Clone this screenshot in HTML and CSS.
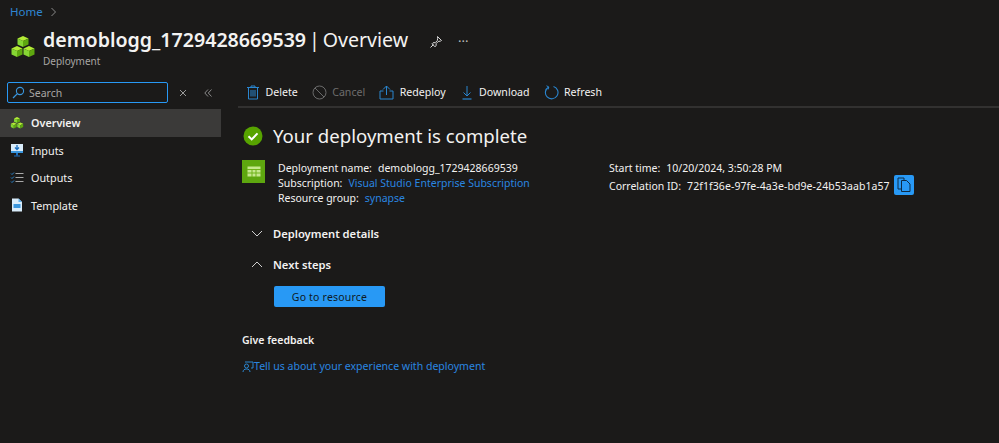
FILE: index.html
```html
<!DOCTYPE html>
<html lang="en">
<head>
<meta charset="utf-8">
<title>demoblogg_1729428669539 | Overview</title>
<link rel="stylesheet" href="styles.css">
</head>
<body>
<svg width="0" height="0" class="defs">
  <defs>
    <g id="cube">
      <polygon points="0,-5 5.5,-2.5 0,0 -5.5,-2.5" fill="#b4ec36"/>
      <polygon points="-5.5,-2.5 0,0 0,6 -5.5,3.5" fill="#86d633"/>
      <polygon points="5.5,-2.5 0,0 0,6 5.500,3.500" fill="#5ea70f"/>
    </g>
  </defs>
</svg>
<header class="top">
  <nav class="crumbs"><a class="link-home">Home</a>
    <svg class="crumb-chev" width="7" height="10" viewBox="0 0 7 10"><path d="M1.5 1l4 4-4 4" fill="none" stroke="#8a8a8a" stroke-width="1"/></svg>
  </nav>
  <div class="title-row">
    <svg class="res-icon" width="26" height="26" viewBox="0 0 26 26"><use href="#cube" x="13" y="7"/><use href="#cube" x="7" y="17"/><use href="#cube" x="19" y="17"/></svg>
    <div class="title-text">
      <h1 class="title"><b class="name">demoblogg_1729428669539</b> | Overview</h1>
      <div class="subtitle">Deployment</div>
    </div>
    <svg class="pin" width="14" height="14" viewBox="0 0 14 14"><path d="M8.5 1.5l4 4-1 .6-2.300.4-2 2-.2 2.300-1 1-3-3 1-1 2.300-.2 2-2 .4-2.300zM4.500 9.500L1.500 12.500" fill="none" stroke="#d8d8d8" stroke-width="1"/></svg>
    <span class="more">···</span>
  </div>
</header>
<div class="layout">
  <aside class="side">
    <div class="search-row">
      <label class="search">
        <svg width="13" height="13" viewBox="0 0 13 13"><circle cx="8" cy="5" r="3.600" fill="none" stroke="#3a96dd" stroke-width="1.100"/><path d="M5.400 7.600L1 12" stroke="#3a96dd" stroke-width="1.300"/></svg>
        <span>Search</span>
      </label>
      <svg class="s-x" width="8" height="8" viewBox="0 0 8 8"><path d="M1 1l6 6M7 1l-6 6" stroke="#9a9a9a" stroke-width="1"/></svg>
      <svg class="s-col" width="8" height="8" viewBox="0 0 8 8"><path d="M4 .5L.8 4 4 7.500M7.500 .5L4.300 4l3.200 3.500" fill="none" stroke="#8a8a8a" stroke-width="1"/></svg>
    </div>
    <ul class="menu">
      <li class="item active">
        <svg width="14" height="14" viewBox="0 0 26 26"><use href="#cube" x="13" y="7"/><use href="#cube" x="7" y="17"/><use href="#cube" x="19" y="17"/></svg>
        <span>Overview</span>
      </li>
      <li class="item">
        <svg width="14" height="14" viewBox="0 0 14 14"><rect x="1" y="1" width="12" height="9" fill="#d9ecfa"/><rect x="1" y="8" width="12" height="2" fill="#3a96dd"/><path d="M7 2v4M5 4.500L7 6.500l2-2" fill="none" stroke="#1b6fc0" stroke-width="1.300"/><rect x="6" y="10" width="2" height="2.500" fill="#1b6fc0"/><rect x="4" y="12.500" width="6" height="1" fill="#1b6fc0"/></svg>
        <span>Inputs</span>
      </li>
      <li class="item">
        <svg width="14" height="14" viewBox="0 0 14 14"><path d="M1 2.500l1 1 2-2M1 6.500l1 1 2-2M1 10.500l1 1 2-2" fill="none" stroke="#2a86d0" stroke-width="1"/><path d="M5.500 2.500h8M5.500 6.500h8M5.500 10.500h8" stroke="#a8a8a8" stroke-width="1.200"/></svg>
        <span>Outputs</span>
      </li>
      <li class="item">
        <svg width="14" height="14" viewBox="0 0 14 14"><path d="M2 0.500h6.500L12 4v9.500H2z" fill="#d9ecfa"/><path d="M8.500 .5V4H12z" fill="#5fb0ec"/><rect x="3.500" y="6" width="7" height="4" fill="#3a96dd"/></svg>
        <span>Template</span>
      </li>
    </ul>
  </aside>
  <main class="main">
    <div class="toolbar">
      <button class="tool">
        <svg width="14" height="15" viewBox="0 0 14 15"><path d="M1 2.500h12M5 2.500V1h4v1.500M2.500 2.500V14h9V2.500M5 5v6.500M7 5v6.500M9 5v6.500" fill="none" stroke="#2a86d0" stroke-width="1"/></svg>
        <span>Delete</span>
      </button>
      <button class="tool off">
        <svg width="15" height="15" viewBox="0 0 15 15"><circle cx="7.500" cy="7.500" r="6.500" fill="none" stroke="#6a6a6a" stroke-width="1"/><path d="M3 3l9 9" stroke="#6a6a6a" stroke-width="1"/></svg>
        <span>Cancel</span>
      </button>
      <button class="tool">
        <svg width="15" height="15" viewBox="0 0 15 15"><path d="M7.500 10V1M4 4.500L7.500 1 11 4.500M4.500 6H1v8h13V6h-3.500" fill="none" stroke="#2a86d0" stroke-width="1"/></svg>
        <span>Redeploy</span>
      </button>
      <button class="tool">
        <svg width="14" height="15" viewBox="0 0 14 15"><path d="M7 1v10M3.500 7.500L7 11l3.500-3.500" fill="none" stroke="#2a86d0" stroke-width="1"/><path d="M2.500 14h9" stroke="#2a86d0" stroke-width="1.200"/></svg>
        <span>Download</span>
      </button>
      <button class="tool">
        <svg width="15" height="15" viewBox="0 0 15 15"><path d="M4.700 2A6.300 6.300 0 1 0 9.500 1.500" fill="none" stroke="#2a86d0" stroke-width="1.100"/><path d="M2.500 .8L4.800 2 4 4.500" fill="none" stroke="#2a86d0" stroke-width="1"/></svg>
        <span>Refresh</span>
      </button>
    </div>
    <div class="content">
      <div class="status">
        <svg width="20" height="20" viewBox="0 0 20 20"><circle cx="10" cy="10" r="9.500" fill="#57a300"/><path d="M5.500 10.200l3.200 3.200 5.800-6" fill="none" stroke="#fff" stroke-width="2"/></svg>
        <h2 class="status-title">Your deployment is complete</h2>
      </div>
      <div class="info">
        <div class="tile"><svg width="14" height="11" viewBox="0 0 14 11"><rect x="0.500" y="0.500" width="13" height="10" fill="#c5e88d"/><path d="M0 3.500h14M5 3.500V11M9 3.500V11M0 7h14" stroke="#6fb31a" stroke-width="1"/></svg></div>
        <dl class="col col-left">
          <div class="row"><dt>Deployment name:</dt><dd>demoblogg_1729428669539</dd></div>
          <div class="row"><dt>Subscription:</dt><dd><a class="link">Visual Studio Enterprise Subscription</a></dd></div>
          <div class="row"><dt>Resource group:</dt><dd><a class="link">synapse</a></dd></div>
        </dl>
        <dl class="col col-right">
          <div class="row"><dt>Start time:</dt><dd>10/20/2024, 3:50:28 PM</dd></div>
          <div class="row"><dt>Correlation ID:</dt><dd class="uuid">72f1f36e-97fe-4a3e-bd9e-24b53aab1a57</dd>
            <span class="copy"><svg width="14" height="15" viewBox="0 0 14 15"><path d="M1 1h6v11H1z" fill="#2899f5" stroke="#0e2a42" stroke-width="1"/><path d="M4.500 3.500H9.500L13 7v7.500H4.500z" fill="#2899f5" stroke="#0e2a42" stroke-width="1"/></svg></span>
          </div>
        </dl>
      </div>
      <div class="section sec-details">
        <svg width="12" height="7" viewBox="0 0 12 7"><path d="M1 1l5 5 5-5" fill="none" stroke="#cfcfcf" stroke-width="1"/></svg>
        <span>Deployment details</span>
      </div>
      <div class="section sec-next">
        <svg width="12" height="7" viewBox="0 0 12 7"><path d="M1 6l5-5 5 5" fill="none" stroke="#cfcfcf" stroke-width="1"/></svg>
        <span>Next steps</span>
      </div>
      <button class="primary">Go to resource</button>
      <div class="fb-title">Give feedback</div>
      <a class="fb-link link">
        <svg width="12" height="12" viewBox="0 0 12 12"><circle cx="4.500" cy="5" r="2" fill="none" stroke="#2a86d0" stroke-width="1"/><path d="M1 11c0-2 1.500-3 3.500-3S8 9 8 11M3 1h8v6H9" fill="none" stroke="#2a86d0" stroke-width="1"/></svg>
        <span>Tell us about your experience with deployment</span>
      </a>
    </div>
  </main>
</div>
</body>
</html>
```
FILE: styles.css
```css
* { box-sizing: border-box; }
html, body { height: 100%; }
body {
  margin: 0;
  background: #1b1a19;
  color: #f3f2f1;
  font-family: "Noto Sans", "Open Sans", "Liberation Sans", sans-serif;
  font-size: 11px;
  overflow: hidden;
}
.defs { position: absolute; }
.top { padding: 4px 0 0 10px; height: 78px; }
.crumbs { display: flex; align-items: center; gap: 7px; height: 15px; font-size: 11.500px; }
.link-home { color: #2f86d2; }
.title-row { display: flex; align-items: flex-start; margin-top: 8px; }
.res-icon { margin-top: 7px; margin-right: 7px; }
.title { margin: 0; font-size: 19.600px; font-weight: 400; line-height: 26px; white-space: nowrap; word-spacing: -2.200px; }
.name { font-weight: 600; }
.subtitle { font-size: 10px; line-height: 13px; color: #a8a6a4; margin-top: 2px; }
.pin { margin: 8px 0 0 21px; }
.more { margin: 3px 0 0 15px; font-size: 13px; color: #bdbdbd; line-height: 22px; }
.layout { display: grid; grid-template-columns: 238px 1fr; }
.side { padding-top: 4px; }
.search-row { display: flex; align-items: center; height: 21px; padding-left: 7px; }
.search { width: 161px; height: 21px; border: 1px solid #2899f5; border-radius: 2px; display: flex; align-items: center; gap: 4px; padding-left: 4px; color: #a8a6a4; font-size: 10.500px; }
.s-x { margin-left: 11px; }
.s-col { margin-left: 17px; }
.menu { list-style: none; margin: 6px 0 0; padding: 0; width: 221px; }
.item { display: flex; align-items: center; gap: 7px; height: 27.500px; padding-left: 10px; font-size: 10.800px; }
.item.active { background: #3b3a39; font-weight: 600; }
.main { min-width: 0; }
.toolbar { display: flex; align-items: center; height: 34px; padding: 4px 0 0 8px; margin-top: -4px; border-bottom: 2px solid #323130; gap: 14px; }
.tool { display: flex; align-items: center; gap: 5.500px; padding: 0; background: none; border: 0; color: #f3f2f1; font: inherit; font-size: 10.600px; }
.tool.off { color: #6e6d6c; }
.content { padding: 0 0 0 4px; }
.status { display: flex; align-items: center; gap: 10px; margin-top: 15px; height: 26px; padding-left: 1px; }
.status-title { margin: 0; font-size: 18.600px; font-weight: 400; line-height: 26px; }
.info { display: flex; margin-top: 11px; }
.tile { width: 23px; height: 23px; background: #5ea70f; display: flex; align-items: center; justify-content: center; }
.col { margin: 0; }
.col-left { width: 331px; margin-left: 13px; }
.col-right { display: flex; flex-direction: column; gap: 3px; }
.row { display: flex; align-items: center; height: 15px; white-space: nowrap; gap: 6px; font-size: 10.500px; }
.row dt { font-weight: 400; }
.row dd { margin: 0; }
.uuid { letter-spacing: .085px; }
.link { color: #2a86e0; }
.copy { width: 20px; height: 20px; background: #2899f5; border-radius: 2px; display: flex; align-items: center; justify-content: center; margin: 0 0 2px -2px; }
.section { display: flex; align-items: center; gap: 10px; padding-left: 9px; font-weight: 600; font-size: 11.200px; height: 16px; }
.sec-details { margin-top: 20px; }
.sec-next { margin-top: 15px; }
.primary { display: block; margin: 14px 0 0 32px; width: 111px; height: 21px; padding: 0; background: #2899f5; border: 0; border-radius: 2px; color: #0f1a24; font: inherit; font-size: 10.500px; letter-spacing: .2px; }
.fb-title { margin-top: 26px; font-weight: 600; font-size: 10.500px; line-height: 15px; }
.fb-link { display: flex; align-items: center; margin-top: 11px; font-size: 10.550px; line-height: 15px; }
```
